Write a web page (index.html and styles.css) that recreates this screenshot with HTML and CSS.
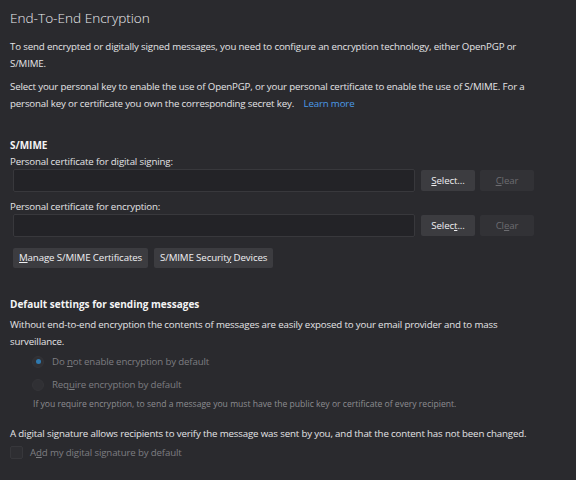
FILE: index.html
```html
<!DOCTYPE html>
<html>
<head>
<meta charset="utf-8">
<link rel="stylesheet" href="styles.css">
</head>
<body>
<div class="page">
  <h1 class="title">End-To-End Encryption</h1>
  <p class="text">To send encrypted or digitally signed messages, you need to configure an encryption technology, either OpenPGP or S/MIME.</p>
  <p class="text">Select your personal key to enable the use of OpenPGP, or your personal certificate to enable the use of S/MIME. For a personal key or certificate you own the corresponding secret key. <a class="link">Learn more</a></p>

  <h2 class="heading smime">S/MIME</h2>
  <div class="label">Personal certificate for digital signing:</div>
  <div class="row">
    <div class="input"></div>
    <button class="btn sel"><u>S</u>elect...</button>
    <button class="btn clear"><u>C</u>lear</button>
  </div>
  <div class="label">Personal certificate for encryption:</div>
  <div class="row">
    <div class="input"></div>
    <button class="btn sel">Selec<u>t</u>...</button>
    <button class="btn clear">Cl<u>e</u>ar</button>
  </div>
  <div class="row buttons">
    <button class="btn"><u>M</u>anage S/MIME Certificates</button>
    <button class="btn">S/MIME Securit<u>y</u> Devices</button>
  </div>

  <h2 class="heading defaults">Default settings for sending messages</h2>
  <p class="text intro">Without end-to-end encryption the contents of messages are easily exposed to your email provider and to mass surveillance.</p>
  <div class="radio-row"><span class="radio checked"></span><span class="dim">Do <u>n</u>ot enable encryption by default</span></div>
  <div class="radio-row"><span class="radio"></span><span class="dim">Req<u>u</u>ire encryption by default</span></div>
  <div class="small">If you require encryption, to send a message you must have the public key or certificate of every recipient.</div>
  <p class="text sig">A digital signature allows recipients to verify the message was sent by you, and that the content has not been changed.</p>
  <div class="check-row"><span class="check"></span><span class="dim">A<u>d</u>d my digital signature by default</span></div>
</div>
</body>
</html>
```

FILE: styles.css
```css
html, body {
  margin: 0;
  padding: 0;
  background: #2a2a2e;
}
body {
  font-family: "Open Sans", "Noto Sans", sans-serif;
  font-size: 9.7px;
  letter-spacing: -0.15px;
  color: #e4e4e6;
}
.page {
  padding: 6px 38px 0 10px;
}
.title {
  font-size: 13.6px;
  font-weight: 300;
  letter-spacing: 0;
  margin: 0 0 7.5px 0;
  line-height: 24px;
  color: #ececee;
}
.text {
  margin: 0 0 6px 0;
  line-height: 17px;
}
.link {
  color: #4a9ae8;
  margin-left: 7px;
}
.heading {
  font-size: 10px;
  font-weight: 700;
  letter-spacing: 0;
  margin: 0;
  line-height: 17px;
  color: #f4f4f5;
}
.smime { margin-top: 25px; }
.label {
  line-height: 15px;
}
.row {
  display: flex;
  align-items: center;
  margin: 0 0 7px 3px;
}
.input {
  box-sizing: border-box;
  width: 402px;
  height: 23px;
  background: #232327;
  border: 1px solid #38383c;
  border-radius: 2px;
  margin-right: 6px;
}
.btn {
  font-family: inherit;
  font-size: 9.7px;
  letter-spacing: -0.12px;
  color: #f0f0f2;
  background: #3c3c40;
  border: none;
  border-radius: 2px;
  height: 21px;
  padding: 0 6px;
  line-height: 21px;
}
.btn.sel { width: 54px; padding: 0; margin-right: 5px; }
.btn.clear { width: 54px; padding: 0; background: #323236; color: #6c6c70; }
.buttons { margin-top: 11px; gap: 6px; }
.buttons .btn { height: 20px; line-height: 20px; }
.defaults { margin-top: 28.5px; }
.intro { margin-top: 3px; margin-bottom: 0; }
.radio-row, .check-row {
  display: flex;
  align-items: center;
  height: 23px;
}
.radio-row { padding-left: 22px; }
.radio {
  box-sizing: border-box;
  width: 12px;
  height: 12px;
  border-radius: 50%;
  background: #303034;
  border: 1px solid #343438;
  margin-right: 8px;
  position: relative;
}
.radio.checked::after {
  content: "";
  position: absolute;
  left: 2.5px;
  top: 2.5px;
  width: 5px;
  height: 5px;
  border-radius: 50%;
  background: #2f7ab0;
}
.dim { color: #7d7d81; }
.small {
  font-size: 8.6px;
  letter-spacing: 0;
  color: #8c8c90;
  padding-left: 23px;
  line-height: 17px;
  margin-bottom: 12px;
}
.sig { margin-bottom: 0; }
.check-row { height: 21px; }
.check {
  box-sizing: border-box;
  width: 13px;
  height: 13px;
  background: #2e2e32;
  border: 1px solid #37373b;
  border-radius: 2px;
  margin-right: 7px;
}
```
